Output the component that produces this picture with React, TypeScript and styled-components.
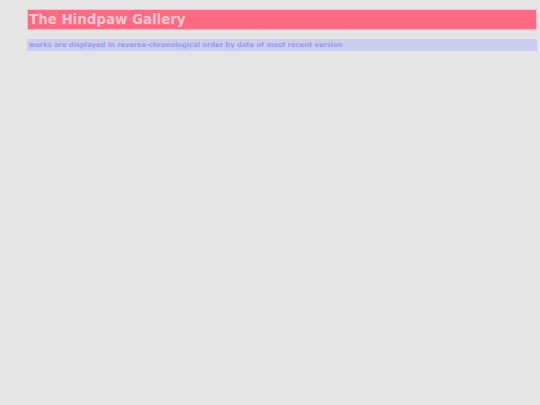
import styled, { createGlobalStyle } from 'styled-components';

const GlobalStyle = createGlobalStyle`
  html, body {
    margin: 0;
    padding: 0;
    background-color: #e5e5e5;
    height: 100%;
  }
  body {
    font-family: 'DejaVu Sans', Verdana, sans-serif;
  }
`;

const Page = styled.div`
  padding: 9px 3px 0 27px;
  display: flex;
  flex-direction: column;
  gap: 9px;
`;

const Title = styled.h1`
  margin: 0;
  font-size: 13.4px;
  font-weight: bold;
  line-height: 19px;
  padding: 0 1px;
  background-color: #ff6a82;
  color: #ffc8d0;
  border: 1px solid #ffb8c4;
`;

const Note = styled.div`
  font-size: 6.75px;
  font-weight: bold;
  line-height: 12px;
  padding: 0 2px;
  background-color: #ccccf0;
  color: #9a9aef;
`;

function App() {
  return (
    <>
      <GlobalStyle />
      <Page>
        <Title>The Hindpaw Gallery</Title>
        <Note>works are displayed in reverse-chronological order by date of most recent version</Note>
      </Page>
    </>
  );
}

export default App;
